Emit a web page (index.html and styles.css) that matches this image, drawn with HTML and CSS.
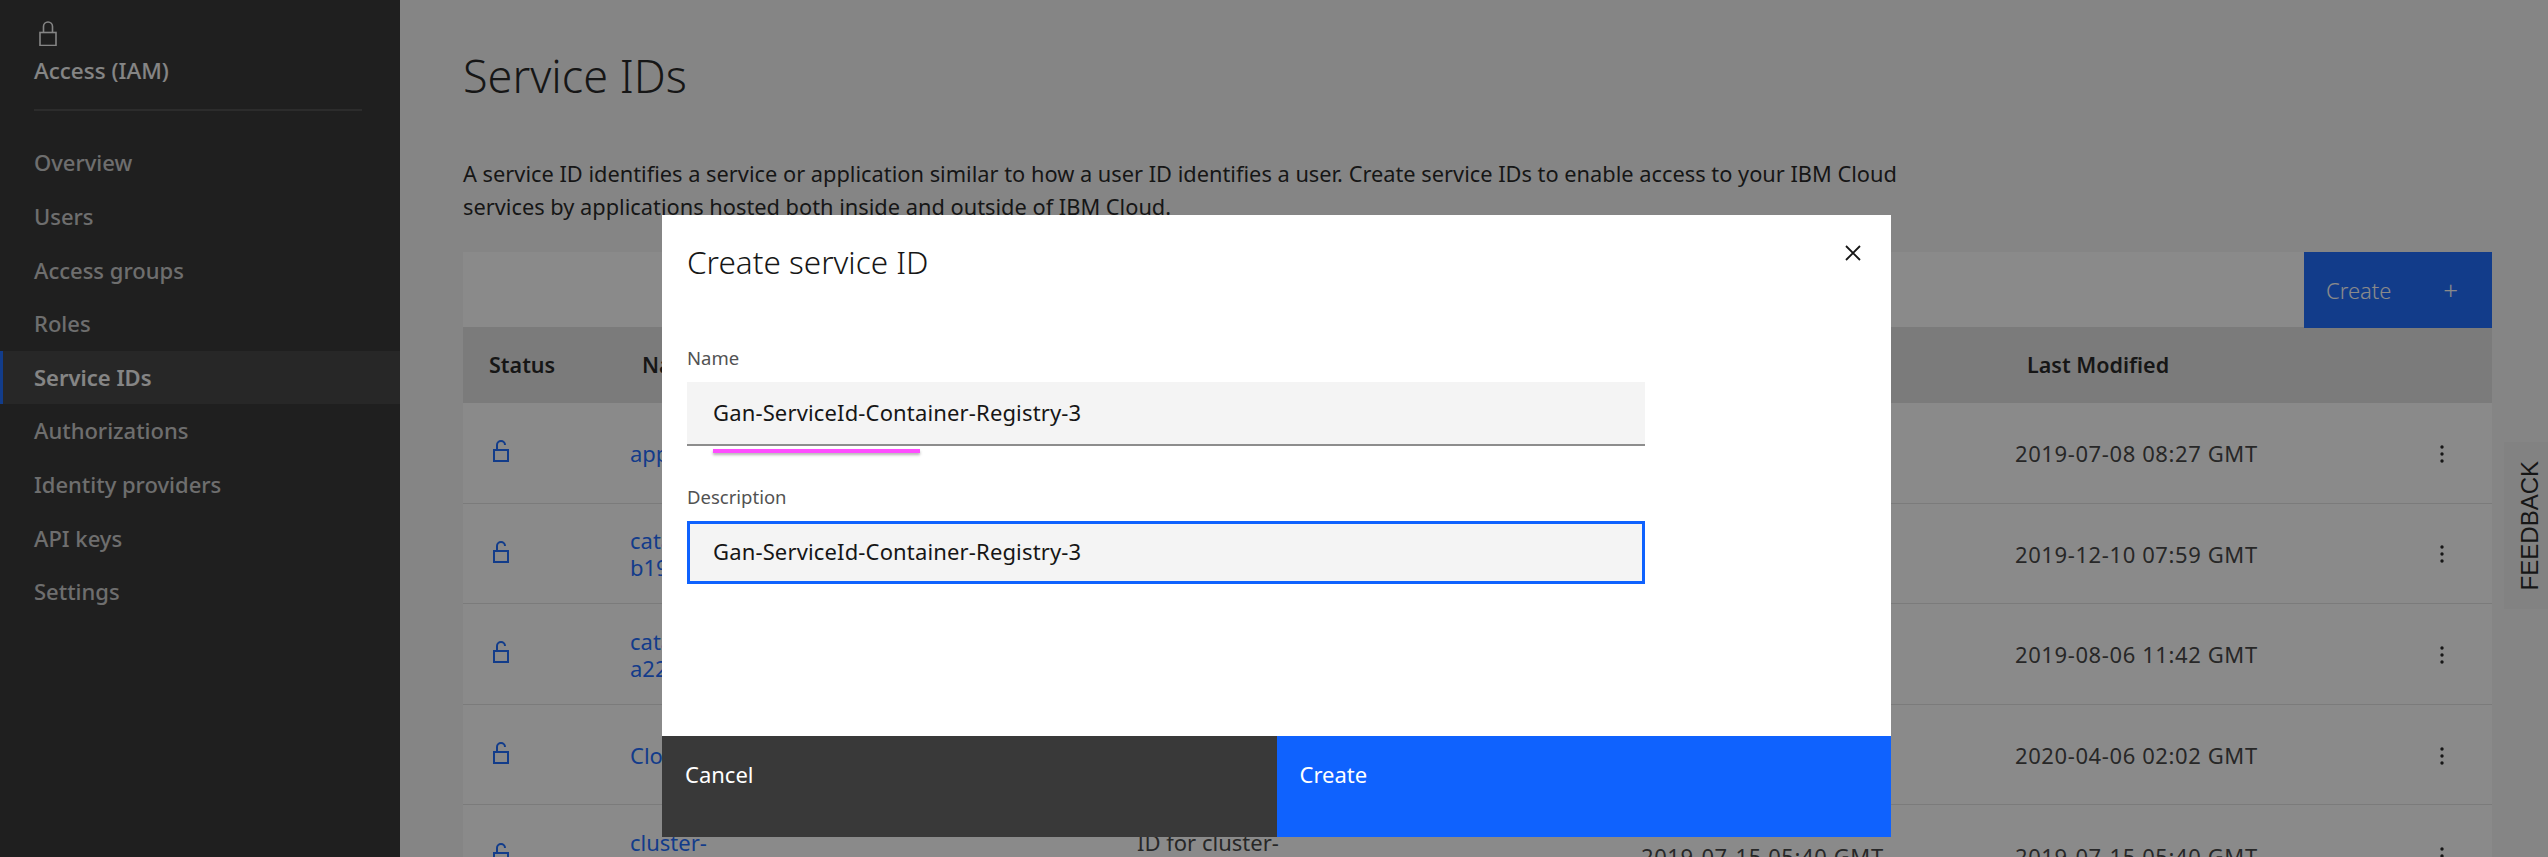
FILE: index.html
```html
<!DOCTYPE html>
<html lang="en">
<head>
    <meta charset="UTF-8">
    <title>Service IDs</title>
    <link rel="stylesheet" href="styles.css">
</head>
<body>
    <div class="page">
        <aside class="sidebar">
            <div class="sidebar-head">
                <svg class="head-icon" width="18" height="25" viewBox="0 0 18 25" fill="none" stroke="currentColor" stroke-width="1.6">
                    <rect x="1" y="11.5" width="16" height="13"/>
                    <path d="M4.5 11.5V5.5a4.5 4.5 0 0 1 9 0v6"/>
                </svg>
                <div class="head-title">Access (IAM)</div>
            </div>
            <nav class="side-nav">
                <a>Overview</a>
                <a>Users</a>
                <a>Access groups</a>
                <a>Roles</a>
                <a class="active">Service IDs</a>
                <a>Authorizations</a>
                <a>Identity providers</a>
                <a>API keys</a>
                <a>Settings</a>
            </nav>
        </aside>

        <main class="content">
            <h1>Service IDs</h1>
            <p class="intro">A service ID identifies a service or application similar to how a user ID identifies a user. Create service IDs to enable access to your IBM Cloud services by applications hosted both inside and outside of IBM Cloud.</p>

            <div class="table">
                <div class="toolbar">
                    <button class="create-btn">Create <span class="plus">+</span></button>
                </div>
                <div class="row head">
                    <div class="cell-status">Status</div>
                    <div class="cell-pad">Name</div>
                    <div>Description</div>
                    <div>Created</div>
                    <div class="cell-pad">Last Modified</div>
                    <div></div>
                </div>

                <div class="row">
                    <div class="cell-lock"><svg width="16" height="22" viewBox="0 0 16 22" fill="none" stroke="currentColor" stroke-width="2"><rect x="1" y="10" width="14" height="11"/><path d="M4 10V5a4 4 0 0 1 8 0"/></svg></div>
                    <a class="name">appid</a>
                    <div></div>
                    <div class="date">2019-07-08 08:27 GMT</div>
                    <div class="date">2019-07-08 08:27 GMT</div>
                    <div class="kebab"><svg width="6" height="20" viewBox="0 0 6 20" fill="currentColor"><circle cx="3" cy="3" r="1.7"/><circle cx="3" cy="10" r="1.7"/><circle cx="3" cy="17" r="1.7"/></svg></div>
                </div>
                <div class="row">
                    <div class="cell-lock"><svg width="16" height="22" viewBox="0 0 16 22" fill="none" stroke="currentColor" stroke-width="2"><rect x="1" y="10" width="14" height="11"/><path d="M4 10V5a4 4 0 0 1 8 0"/></svg></div>
                    <a class="name">catalog-<br>b19</a>
                    <div></div>
                    <div class="date">2019-12-10 07:59 GMT</div>
                    <div class="date">2019-12-10 07:59 GMT</div>
                    <div class="kebab"><svg width="6" height="20" viewBox="0 0 6 20" fill="currentColor"><circle cx="3" cy="3" r="1.7"/><circle cx="3" cy="10" r="1.7"/><circle cx="3" cy="17" r="1.7"/></svg></div>
                </div>
                <div class="row">
                    <div class="cell-lock"><svg width="16" height="22" viewBox="0 0 16 22" fill="none" stroke="currentColor" stroke-width="2"><rect x="1" y="10" width="14" height="11"/><path d="M4 10V5a4 4 0 0 1 8 0"/></svg></div>
                    <a class="name">catalog-<br>a22</a>
                    <div></div>
                    <div class="date">2019-08-06 11:42 GMT</div>
                    <div class="date">2019-08-06 11:42 GMT</div>
                    <div class="kebab"><svg width="6" height="20" viewBox="0 0 6 20" fill="currentColor"><circle cx="3" cy="3" r="1.7"/><circle cx="3" cy="10" r="1.7"/><circle cx="3" cy="17" r="1.7"/></svg></div>
                </div>
                <div class="row">
                    <div class="cell-lock"><svg width="16" height="22" viewBox="0 0 16 22" fill="none" stroke="currentColor" stroke-width="2"><rect x="1" y="10" width="14" height="11"/><path d="M4 10V5a4 4 0 0 1 8 0"/></svg></div>
                    <a class="name">Cloud</a>
                    <div></div>
                    <div class="date">2020-04-06 02:02 GMT</div>
                    <div class="date">2020-04-06 02:02 GMT</div>
                    <div class="kebab"><svg width="6" height="20" viewBox="0 0 6 20" fill="currentColor"><circle cx="3" cy="3" r="1.7"/><circle cx="3" cy="10" r="1.7"/><circle cx="3" cy="17" r="1.7"/></svg></div>
                </div>
                <div class="row">
                    <div class="cell-lock"><svg width="16" height="22" viewBox="0 0 16 22" fill="none" stroke="currentColor" stroke-width="2"><rect x="1" y="10" width="14" height="11"/><path d="M4 10V5a4 4 0 0 1 8 0"/></svg></div>
                    <a class="name">cluster-<br>2f1</a>
                    <div>ID for cluster-<br>2f1</div>
                    <div class="date">2019-07-15 05:40 GMT</div>
                    <div class="date">2019-07-15 05:40 GMT</div>
                    <div class="kebab"><svg width="6" height="20" viewBox="0 0 6 20" fill="currentColor"><circle cx="3" cy="3" r="1.7"/><circle cx="3" cy="10" r="1.7"/><circle cx="3" cy="17" r="1.7"/></svg></div>
                </div>
            </div>
        </main>
    </div>

    <div class="feedback"><span>FEEDBACK</span></div>

    <div class="overlay">
        <div class="modal">
            <div class="modal-head">
                <h2>Create service ID</h2>
                <svg class="close" width="16" height="16" viewBox="0 0 16 16" fill="none" stroke="#161616" stroke-width="1.8"><path d="M1 1l14 14M15 1L1 15"/></svg>
            </div>
            <div class="modal-body">
                <label>Name</label>
                <div class="input">Gan-ServiceId-Container-Registry-3</div>
                <div class="mark"></div>
                <label class="second">Description</label>
                <div class="input focus">Gan-ServiceId-Container-Registry-3</div>
            </div>
            <div class="modal-foot">
                <button class="btn-cancel">Cancel</button>
                <button class="btn-create">Create</button>
            </div>
        </div>
    </div>
</body>
</html>
```

FILE: styles.css
```css
* {
    box-sizing: border-box;
}
html, body {
    margin: 0;
    height: 100%;
    overflow: hidden;
}
body {
    font-family: "Noto Sans", Arial, sans-serif;
    font-size: 22px;
    color: #161616;
    background: #f5f5f5;
}
.page {
    display: flex;
    height: 857px;
    overflow: hidden;
}

/* left nav */
.sidebar {
    width: 400px;
    flex-shrink: 0;
    background: #292929;
    color: #c6c6c6;
}
.sidebar-head {
    height: 111px;
    margin: 0 38px 0 34px;
    padding: 21px 0 0 5px;
    border-bottom: 2px solid #434343;
}
.head-icon {
    display: block;
    color: #f4f4f4;
}
.head-title {
    margin: 9px 0 0 -5px;
    font-size: 22.5px;
    line-height: 32px;
    font-weight: 500;
    color: #f4f4f4;
}
.side-nav {
    margin-top: 25.4px;
}
.side-nav a {
    display: block;
    height: 53.6px;
    line-height: 53.6px;
    padding-left: 34px;
    font-size: 22px;
    font-weight: 500;
}
.side-nav .active {
    background: #393939;
    border-left: 3px solid #0f62fe;
    padding-left: 31px;
    color: #f4f4f4;
    font-weight: 600;
}

/* main area */
.content {
    flex: 1;
    padding: 0 56px 0 63px;
    min-width: 0;
}
h1 {
    margin: 46px 0 0;
    font-size: 45px;
    line-height: 60px;
    font-weight: 300;
}
.intro {
    margin: 51px 0 0;
    width: 1440px;
    height: 95px;
    line-height: 33px;
    font-size: 21.8px;
    font-weight: 400;
}
.table {
    background: #fff;
}
.toolbar {
    display: flex;
    justify-content: flex-end;
    height: 75px;
    background: #fff;
}
.create-btn {
    position: relative;
    display: flex;
    justify-content: space-between;
    align-items: center;
    width: 188px;
    height: 76px;
    padding: 0 34px 0 22px;
    border: none;
    background: #0f62fe;
    color: #fff;
    font-family: inherit;
    font-size: 22px;
    font-weight: 300;
}
.plus {
    font-size: 26px;
}
.row {
    display: grid;
    grid-template-columns: 167px 507px 504px 374px 424px 1fr;
    align-items: center;
    height: 100.6px;
    padding-top: 2px;
    line-height: 27px;
    border-bottom: 1px solid #e0e0e0;
    color: #393939;
}
.row.head {
    height: 76px;
    padding: 0 0 2px;
    background: #e0e0e0;
    border-bottom: none;
    color: #161616;
    font-weight: 600;
    font-size: 21.5px;
}
.cell-status {
    padding-left: 26px;
}
.cell-pad {
    padding-left: 12px;
}
.cell-lock {
    display: flex;
    padding: 0 0 5px 30px;
    color: #0f62fe;
}
.name {
    color: #0f62fe;
}
.date {
    letter-spacing: 0.6px;
}
.kebab {
    display: flex;
    color: #161616;
}

/* feedback tab */
.feedback {
    position: fixed;
    right: 0;
    top: 442px;
    width: 44px;
    height: 167px;
    padding-left: 8px;
    display: flex;
    align-items: center;
    justify-content: center;
    background: #eee;
}
.feedback span {
    writing-mode: vertical-rl;
    transform: rotate(180deg);
    font-family: "Liberation Sans", Arial, sans-serif;
    font-size: 24px;
}

/* modal */
.overlay {
    position: fixed;
    top: 0;
    left: 0;
    right: 0;
    bottom: 0;
    padding: 215px 0 0 662px;
    background: rgba(22, 22, 22, 0.5);
}
.modal {
    display: flex;
    flex-direction: column;
    width: 1229px;
    height: 622px;
    background: #fff;
}
.modal-head {
    display: flex;
    justify-content: space-between;
    align-items: flex-start;
    height: 127px;
    padding: 24px 30px 0 25px;
}
h2 {
    margin: 0;
    font-size: 31.5px;
    line-height: 46px;
    font-weight: 300;
}
.close {
    margin-top: 6px;
}
.modal-body {
    flex: 1;
    padding: 0 25px;
    display: flex;
    flex-direction: column;
    align-items: flex-start;
}
label {
    height: 40px;
    line-height: 32px;
    font-size: 18.5px;
    color: #525252;
}
.second {
    margin-top: 35px;
}
.input {
    width: 958px;
    height: 64px;
    padding: 0 26px;
    line-height: 60px;
    letter-spacing: 0.15px;
    background: #f4f4f4;
    border-bottom: 2px solid #8d8d8d;
    color: #161616;
}
.input.focus {
    height: 63px;
    border: 3px solid #0f62fe;
    padding: 0 23px;
    line-height: 55px;
}
.mark {
    width: 207px;
    height: 4px;
    margin: 3px 0 -7px 26px;
    background: #ff4dff;
    box-shadow: 0 2px 3px rgba(0, 0, 0, 0.3);
}
.modal-foot {
    display: flex;
    height: 101px;
}
.modal-foot button {
    flex: 1;
    border: none;
    padding: 0 0 26px 23px;
    text-align: left;
    color: #fff;
    font-family: inherit;
    font-size: 22px;
}
.btn-cancel {
    background: #393939;
}
.btn-create {
    background: #0f62fe;
}
```
